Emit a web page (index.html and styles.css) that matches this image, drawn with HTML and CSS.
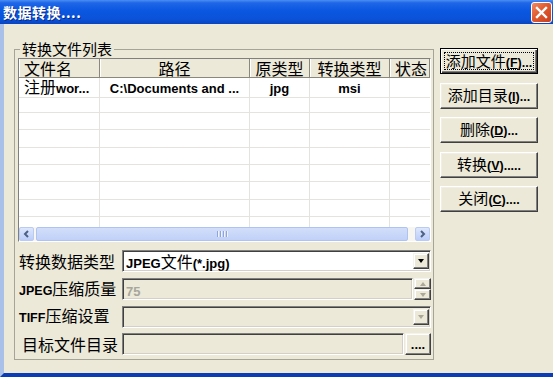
FILE: index.html
```html
<!DOCTYPE html>
<html lang="zh-CN">
  <head>
    <meta charset="UTF-8" />
    <title>数据转换</title>
    <link rel="stylesheet" href="styles.css">
  </head>
  <body>
    <div class="window">
      <div class="titlebar">
        <span class="title">数据转换....</span>
        <span class="close-btn">
          <svg width="13" height="13" viewBox="0 0 13 13">
            <path d="M2 2 L11 11 M11 2 L2 11" stroke="#fff" stroke-width="2.4" stroke-linecap="square" />
          </svg>
        </span>
      </div>

      <div class="frame">
        <fieldset class="group">
          <legend>转换文件列表</legend>

          <div class="listview">
            <div class="lv-head">
              <div class="hcell left">文件名</div>
              <div class="hcell">路径</div>
              <div class="hcell">原类型</div>
              <div class="hcell">转换类型</div>
              <div class="hcell left">状态</div>
            </div>
            <div class="lv-body">
              <div class="lv-row">
                <div class="cell left">注册<b>wor...</b></div>
                <div class="cell"><b>C:\Documents and ...</b></div>
                <div class="cell"><b>jpg</b></div>
                <div class="cell"><b>msi</b></div>
                <div class="cell"></div>
              </div>
              <div class="lv-row"><div class="cell"></div><div class="cell"></div><div class="cell"></div><div class="cell"></div><div class="cell"></div></div>
              <div class="lv-row"><div class="cell"></div><div class="cell"></div><div class="cell"></div><div class="cell"></div><div class="cell"></div></div>
              <div class="lv-row"><div class="cell"></div><div class="cell"></div><div class="cell"></div><div class="cell"></div><div class="cell"></div></div>
              <div class="lv-row"><div class="cell"></div><div class="cell"></div><div class="cell"></div><div class="cell"></div><div class="cell"></div></div>
              <div class="lv-row"><div class="cell"></div><div class="cell"></div><div class="cell"></div><div class="cell"></div><div class="cell"></div></div>
              <div class="lv-row"><div class="cell"></div><div class="cell"></div><div class="cell"></div><div class="cell"></div><div class="cell"></div></div>
              <div class="lv-row"><div class="cell"></div><div class="cell"></div><div class="cell"></div><div class="cell"></div><div class="cell"></div></div>
              <div class="lv-row partial"><div class="cell"></div><div class="cell"></div><div class="cell"></div><div class="cell"></div><div class="cell"></div></div>
            </div>
            <div class="hscroll">
              <span class="sb-btn">
                <svg width="7" height="8" viewBox="0 0 7 8"><path d="M5 1 L2 4 L5 7" fill="none" stroke="#4d6185" stroke-width="2" /></svg>
              </span>
              <div class="sb-track">
                <div class="sb-thumb">
                  <span class="grip"></span><span class="grip"></span><span class="grip"></span><span class="grip"></span>
                </div>
              </div>
              <span class="sb-btn">
                <svg width="7" height="8" viewBox="0 0 7 8"><path d="M2 1 L5 4 L2 7" fill="none" stroke="#4d6185" stroke-width="2" /></svg>
              </span>
            </div>
          </div>

          <div class="form-row">
            <label>转换数据类型</label>
            <div class="field white">
              <span class="value"><b>JPEG</b>文件<b>(*.jpg)</b></span>
              <span class="drop-btn"><span class="tri"></span></span>
            </div>
          </div>
          <div class="form-row">
            <label><b>JPEG</b>压缩质量</label>
            <div class="field-pair">
              <div class="field">
                <span class="value muted"><b>75</b></span>
              </div>
              <div class="spinner">
                <span class="spin-btn"><span class="tri up"></span></span>
                <span class="spin-btn"><span class="tri off"></span></span>
              </div>
            </div>
          </div>
          <div class="form-row">
            <label><b>TIFF</b>压缩设置</label>
            <div class="field">
              <span class="value"></span>
              <span class="drop-btn"><span class="tri off"></span></span>
            </div>
          </div>
          <div class="form-row">
            <label class="indent">目标文件目录</label>
            <div class="field-pair">
              <div class="field">
                <span class="value"></span>
              </div>
              <span class="browse-btn"><b>....</b></span>
            </div>
          </div>
        </fieldset>

        <div class="buttons">
          <button class="btn default"><span class="focus">添加文件<b>(<u>F</u>)...</b></span></button>
          <button class="btn">添加目录<b>(<u>I</u>)...</b></button>
          <button class="btn">删除<b>(<u>D</u>)...</b></button>
          <button class="btn">转换<b>(<u>V</u>).....</b></button>
          <button class="btn">关闭<b>(<u>C</u>)....</b></button>
        </div>
      </div>
    </div>
  </body>
</html>
```

FILE: styles.css
```css
* {
  box-sizing: border-box;
}

body {
  margin: 0;
  background: #ece9d8;
  font-family: "Noto Sans CJK SC", sans-serif;
  font-size: 16px;
  color: #000;
}

b {
  font-family: "Liberation Sans", Arial, sans-serif;
  font-weight: bold;
  font-size: 13px;
}

.window {
  width: 553px;
  height: 377px;
  display: flex;
  flex-direction: column;
  overflow: hidden;
}

/* title bar */
.titlebar {
  height: 24px;
  flex: none;
  display: flex;
  align-items: center;
  justify-content: space-between;
  padding: 0 1px 0 3px;
  background: linear-gradient(#4a8ff2 0%, #1f66e8 12%, #0b57e0 45%, #0a52d8 80%, #0a44c0 100%);
}

.title {
  color: #fff;
  font-weight: bold;
  font-size: 14px;
  line-height: 16px;
  letter-spacing: 0.5px;
  text-shadow: 1px 1px 0 #0a2c8c;
}

.close-btn {
  width: 21px;
  height: 21px;
  display: flex;
  align-items: center;
  justify-content: center;
  border: 1px solid #fff;
  border-radius: 3px;
  background: linear-gradient(135deg, #f08a64 0%, #e05a2e 45%, #c8401c 100%);
}

/* client area */
.frame {
  flex: 1;
  display: flex;
  align-items: flex-start;
  gap: 6px;
  padding: 16px 15px 0 10px;
  border-left: 4px solid #a9c1e8;
  border-bottom: 4px solid #0b3cb8;
}

.group {
  width: 420px;
  margin: 0;
  padding: 0 2px 4px 3px;
  border: 1px solid #a5a497;
}

.group legend {
  font-size: 15px;
  line-height: 18px;
  padding: 0 2px;
  margin-left: 2px;
}

/* list view */
.listview {
  height: 184px;
  display: flex;
  flex-direction: column;
  border: 1px solid;
  border-color: #7f7f7f #fff #fff #7f7f7f;
  background: #fff;
}

.lv-head,
.lv-row {
  display: grid;
  grid-template-columns: 81px 150px 60px 80px 1fr;
}

.lv-head {
  height: 19px;
  flex: none;
  background: #ece9d8;
  border-bottom: 1px solid #8a887d;
}

.hcell {
  line-height: 18px;
  text-align: center;
  border-right: 1px solid #8a887d;
  box-shadow: inset 1px 0 0 #fff;
  white-space: nowrap;
}

.hcell.left,
.cell.left {
  text-align: left;
  padding-left: 5px;
}

.lv-body {
  flex: 1;
  display: flex;
  flex-direction: column;
}

.lv-row {
  height: 17.4px;
  flex: none;
}

.lv-row.partial {
  flex: 1;
  height: auto;
}

.cell {
  line-height: 17px;
  text-align: center;
  border-right: 1px solid #e4e3dd;
  border-bottom: 1px solid #e4e3dd;
  white-space: nowrap;
}

.partial .cell {
  border-bottom: none;
}

.cell:last-child {
  border-right: none;
}

/* horizontal scroll bar */
.hscroll {
  height: 14px;
  flex: none;
  display: flex;
  background: #f7f6f1;
}

.sb-btn {
  width: 15px;
  display: flex;
  align-items: center;
  justify-content: center;
  border: 1px solid #b9cbf3;
  border-radius: 2px;
  background: linear-gradient(#dde7fc, #bccdf8);
}

.sb-track {
  flex: 1;
  padding: 0 7px 0 2px;
}

.sb-thumb {
  height: 100%;
  display: flex;
  align-items: center;
  justify-content: center;
  gap: 1px;
  border: 1px solid #aec3f1;
  border-radius: 2px;
  background: linear-gradient(#d3def9, #c0d1f8);
}

.grip {
  width: 1px;
  height: 6px;
  background: #8ea5d8;
  box-shadow: 1px 0 0 #eef3fe;
  margin-right: 1px;
}

/* form rows */
.form-row {
  display: grid;
  grid-template-columns: 104px 1fr;
  align-items: center;
  height: 22px;
  margin-top: 5.5px;
}

.listview + .form-row {
  margin-top: 8px;
}

.form-row label {
  font-size: 16px;
  line-height: 20px;
  white-space: nowrap;
  padding-left: 1px;
}

.form-row label.indent {
  padding-left: 4px;
}

.form-row label b {
  font-size: 12.5px;
}

.field {
  flex: 1;
  height: 22px;
  display: flex;
  align-items: stretch;
  border: 1px solid;
  border-color: #808080 #fff #fff #808080;
  box-shadow: inset 1px 1px 0 #404040, inset -1px -1px 0 #d4d0c8;
  background: #ece9d8;
  padding: 2px 1px 2px 2px;
}

.field.white {
  background: #fff;
}

.value {
  flex: 1;
  line-height: 17px;
  padding-left: 1px;
  white-space: nowrap;
}

.value.muted b {
  color: #a7a69c;
}

.field-pair {
  display: flex;
  height: 22px;
}

.drop-btn,
.spin-btn,
.browse-btn {
  display: flex;
  align-items: center;
  justify-content: center;
  background: #ece9d8;
  border: 1px solid;
  border-color: #f4f3ee #404040 #404040 #f4f3ee;
  box-shadow: inset -1px -1px 0 #808080, inset 1px 1px 0 #fff;
}

.drop-btn {
  width: 16px;
}

.spinner {
  width: 17px;
  display: flex;
  flex-direction: column;
  margin-left: 1px;
}

.spin-btn {
  flex: 1;
}

.browse-btn {
  width: 26px;
  margin-left: 1px;
  align-items: flex-end;
  padding-bottom: 3px;
}

.browse-btn b {
  line-height: 12px;
  font-size: 13px;
}

.tri {
  width: 0;
  height: 0;
  border-left: 3.5px solid transparent;
  border-right: 3.5px solid transparent;
  border-top: 4px solid #000;
}

.tri.off {
  border-top-color: #aca899;
}

.tri.up {
  border-top: none;
  border-bottom: 4px solid #aca899;
}

/* command buttons */
.buttons {
  width: 98px;
  margin-top: 8px;
  display: flex;
  flex-direction: column;
  gap: 8.5px;
}

.btn {
  height: 26px;
  padding: 0;
  font-family: "Noto Sans CJK SC", sans-serif;
  font-size: 15px;
  line-height: 18px;
  color: #000;
  white-space: nowrap;
  background: #ece9d8;
  border: 1px solid;
  border-color: #fff #404040 #404040 #fff;
  box-shadow: inset -1px -1px 0 #808080, inset 1px 1px 0 #f1efe2;
  cursor: pointer;
}

.btn b {
  font-size: 12.5px;
}

.btn.default {
  border: 1px solid #000;
  box-shadow: inset 1px 1px 0 #fff, inset -1px -1px 0 #404040, inset -2px -2px 0 #808080;
  padding: 3px;
}

.focus {
  display: block;
  height: 100%;
  border: 1px dotted #000;
  line-height: 16px;
}
```
